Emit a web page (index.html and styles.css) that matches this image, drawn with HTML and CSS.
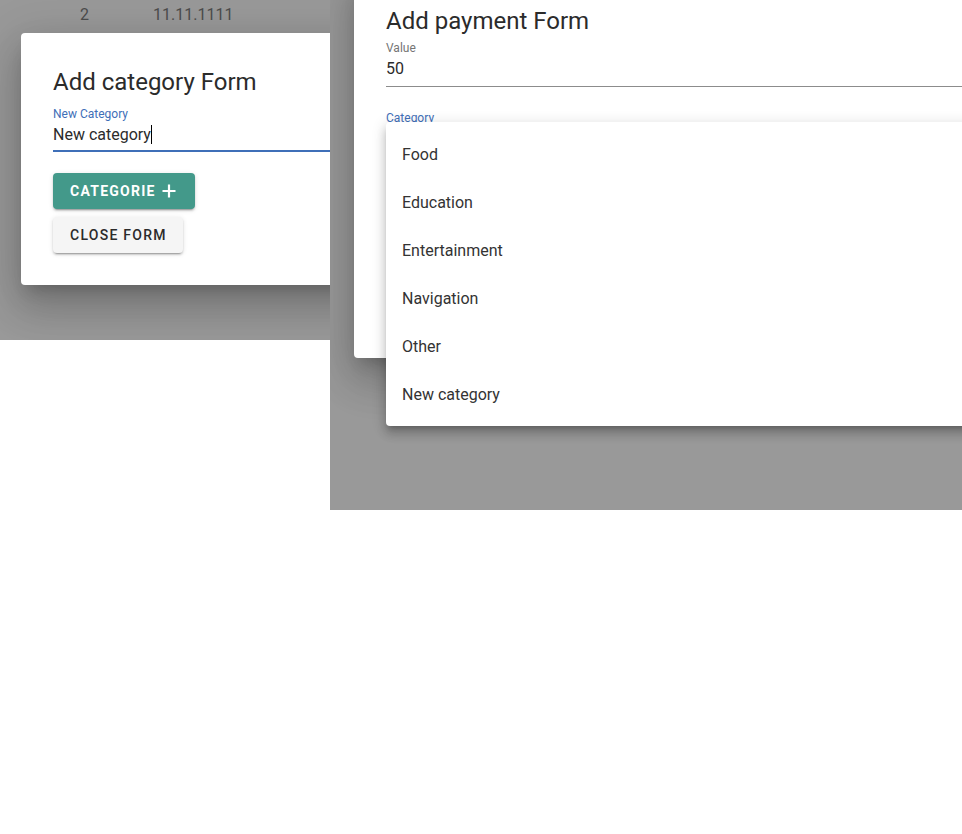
FILE: index.html
```html
<!DOCTYPE html>
<html lang="en">
<head>
<meta charset="utf-8">
<title>Forms</title>
<link rel="stylesheet" href="styles.css">
</head>
<body>
<div class="stage">
  <section class="panel panel-left">
    <div class="table-row">
      <span class="cell cell-num">2</span>
      <span class="cell">11.11.1111</span>
    </div>
    <div class="modal modal-category">
      <h2 class="modal-title">Add category Form</h2>
      <div class="field">
        <label class="field-label focused">New Category</label>
        <div class="field-input focused-line">New category<span class="caret"></span></div>
      </div>
      <div class="actions">
        <button class="btn btn-primary">CATEGORIE
          <svg class="plus" width="16" height="16" viewBox="0 0 16 16"><path d="M8 1.5v13M1.5 8h13" stroke="#fff" stroke-width="2.2" fill="none"/></svg>
        </button>
        <button class="btn btn-default">CLOSE FORM</button>
      </div>
    </div>
  </section>

  <section class="panel panel-right">
    <div class="modal modal-payment">
      <h2 class="modal-title">Add payment Form</h2>
      <div class="field">
        <label class="field-label">Value</label>
        <div class="field-input plain-line">50</div>
      </div>
      <div class="field field-category">
        <label class="field-label focused">Category</label>
        <div class="field-input plain-line">&nbsp;</div>
      </div>
      <ul class="menu">
        <li class="menu-item">Food</li>
        <li class="menu-item">Education</li>
        <li class="menu-item">Entertainment</li>
        <li class="menu-item">Navigation</li>
        <li class="menu-item">Other</li>
        <li class="menu-item">New category</li>
      </ul>
    </div>
  </section>
</div>
</body>
</html>
```

FILE: styles.css
```css
* { box-sizing: border-box; }

html, body {
  margin: 0;
  padding: 0;
  background: #ffffff;
  font-family: Roboto, "Noto Sans", Arial, sans-serif;
  color: rgba(0, 0, 0, 0.87);
}

.stage {
  display: flex;
  align-items: flex-start;
  width: 962px;
}

.panel {
  background: #999999;
  overflow: hidden;
}

.panel-left {
  width: 330px;
  height: 340px;
  flex: none;
}

.panel-right {
  flex: 1;
  height: 510px;
}

.table-row {
  display: flex;
  height: 30px;
  line-height: 30px;
  font-size: 16px;
  color: #4a4a4a;
  padding-left: 80px;
}

.cell-num {
  width: 73px;
}

.modal {
  background: #fff;
  border-radius: 4px;
  box-shadow: 0 11px 15px -7px rgba(0,0,0,0.2), 0 24px 38px 3px rgba(0,0,0,0.14), 0 9px 46px 8px rgba(0,0,0,0.12);
  padding: 32px;
}

.modal-category {
  margin: 3px 0 0 21px;
  width: 420px;
  padding-top: 33px;
}

.modal-payment {
  position: relative;
  margin: -27px 0 0 24px;
  width: 720px;
  height: 385px;
}

.modal-title {
  margin: 0;
  font-size: 24px;
  line-height: 32px;
  font-weight: 400;
  color: #2b2b2b;
}

.field {
  margin-top: 10px;
}

.modal-payment .field {
  margin-top: 5px;
}

.modal-payment .field-category {
  margin-top: 25px;
}

.field-label {
  display: block;
  font-size: 12px;
  line-height: 12px;
  color: #757575;
}

.field-label.focused {
  color: #3f6fb8;
}

.field-input {
  margin-top: 5px;
  font-size: 16px;
  line-height: 20px;
  color: #2b2b2b;
  white-space: nowrap;
}

.focused-line {
  padding-bottom: 5px;
  border-bottom: 2px solid #3f6fb8;
}

.plain-line {
  padding-bottom: 7px;
  border-bottom: 1px solid #8c8c8c;
}

.caret {
  display: inline-block;
  width: 1px;
  height: 19px;
  background: #000;
  vertical-align: -4px;
}

.actions {
  display: flex;
  flex-direction: column;
  align-items: flex-start;
  gap: 8px;
  margin-top: 21px;
}

.btn {
  display: inline-flex;
  align-items: center;
  gap: 5px;
  height: 36px;
  padding: 0 17px;
  border: none;
  border-radius: 4px;
  font-family: Roboto, "Noto Sans", Arial, sans-serif;
  font-size: 14px;
  font-weight: 500;
  letter-spacing: 1.25px;
  cursor: pointer;
}

.btn-primary {
  background: #43998a;
  color: #fff;
  font-weight: 700;
  padding-right: 18px;
  box-shadow: 0 3px 1px -2px rgba(0,0,0,0.2), 0 2px 2px 0 rgba(0,0,0,0.14), 0 1px 5px 0 rgba(0,0,0,0.12);
}

.btn-default {
  background: #f5f5f5;
  color: #2b2b2b;
  padding-right: 16px;
  box-shadow: 0 3px 1px -2px rgba(0,0,0,0.2), 0 2px 2px 0 rgba(0,0,0,0.14), 0 1px 5px 0 rgba(0,0,0,0.12);
}

.plus {
  display: block;
}

.menu {
  position: absolute;
  left: 32px;
  top: 149px;
  width: 660px;
  margin: 0;
  padding: 9px 0 7px;
  list-style: none;
  background: #fff;
  border-radius: 4px;
  box-shadow: 0 5px 5px -3px rgba(0,0,0,0.2), 0 8px 10px 1px rgba(0,0,0,0.14), 0 3px 14px 2px rgba(0,0,0,0.12);
}

.menu-item {
  height: 48px;
  line-height: 48px;
  padding-left: 16px;
  font-size: 16px;
  color: #333;
}
```
